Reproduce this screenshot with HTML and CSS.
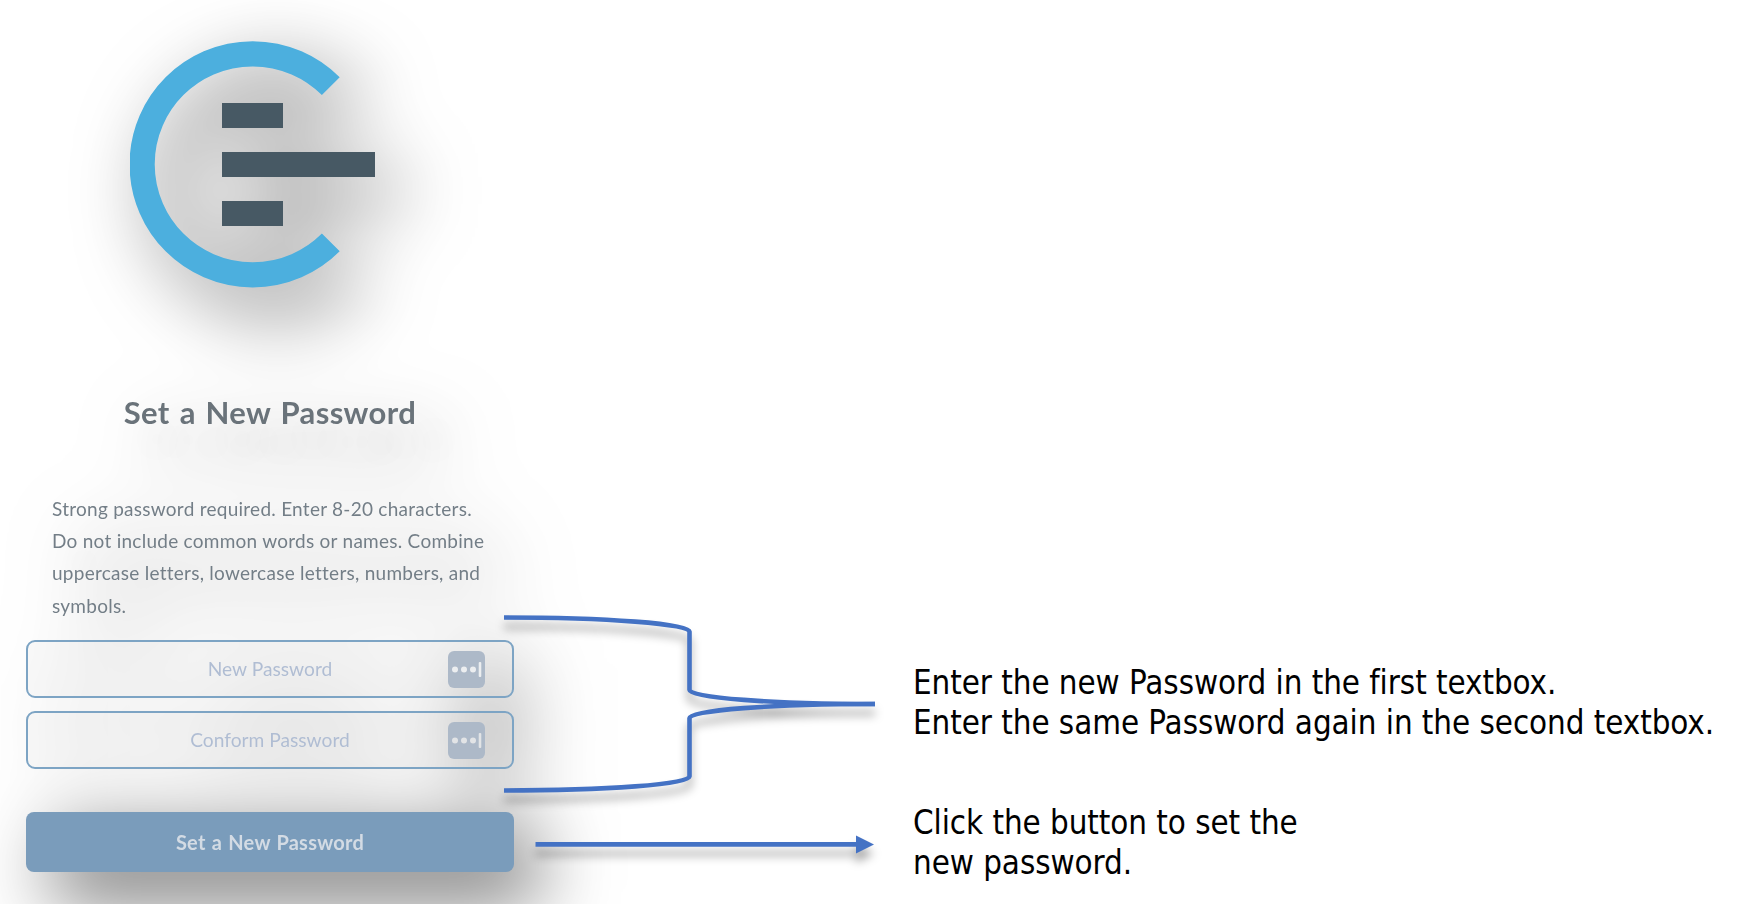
FILE: index.html
```html
<!DOCTYPE html>
<html lang="en">
<head>
  <meta charset="UTF-8" />
  <meta name="viewport" content="width=device-width, initial-scale=1.0"/>
  <title>Set a New Password</title>
  <link rel="stylesheet" href="styles.css">
</head>
<body>

  <div class="page">
    <div class="card">
      <svg class="logo" width="246" height="248" viewBox="0 0 246 248">
        <path d="M200.8 45.2 A110.5 110.5 0 1 0 200.8 201.4" fill="none" stroke="#4cafde" stroke-width="25.2"/>
        <g fill="#475964">
          <rect x="92" y="62" width="61" height="25"/>
          <rect x="92" y="111" width="153" height="25"/>
          <rect x="92" y="160" width="61" height="25"/>
        </g>
      </svg>

      <h1>Set a New Password</h1>

      <p class="rules">
        Strong password required. Enter 8-20 characters.<br>
        Do not include common words or names. Combine<br>
        uppercase letters, lowercase letters, numbers, and<br>
        symbols.
      </p>

      <form id="passwordForm">
        <div class="input-group">
          <input type="password" name="password" placeholder="New Password" />
          <svg class="key" width="37" height="37" viewBox="0 0 37 37">
            <rect width="37" height="37" rx="6" fill="#adb9c8"/>
            <g fill="#eceef0">
              <circle cx="7" cy="18.5" r="3"/>
              <circle cx="16" cy="18.5" r="3"/>
              <circle cx="25" cy="18.5" r="3"/>
              <rect x="30.7" y="11" width="2.6" height="15" rx="1"/>
            </g>
          </svg>
        </div>
        <div class="input-group">
          <input type="password" name="confirm" placeholder="Conform Password" />
          <svg class="key" width="37" height="37" viewBox="0 0 37 37">
            <rect width="37" height="37" rx="6" fill="#adb9c8"/>
            <g fill="#e2e4e6">
              <circle cx="7" cy="18.5" r="3"/>
              <circle cx="16" cy="18.5" r="3"/>
              <circle cx="25" cy="18.5" r="3"/>
              <rect x="30.7" y="11" width="2.6" height="15" rx="1"/>
            </g>
          </svg>
        </div>
        <button type="submit">Set a New Password</button>
      </form>
    </div>

    <svg class="lines" width="384" height="304" viewBox="0 0 384 304">
      <g fill="none" stroke="#4472c4" stroke-width="4.6" stroke-linejoin="round">
        <path d="M4 17.5 A185.5 14 0 0 1 189.5 31.5 V90 A185.5 14 0 0 0 375 104"/>
        <path d="M4 190.5 A185.5 14 0 0 0 189.5 176.5 V118 A185.5 14 0 0 1 375 104"/>
        <path d="M35.5 244.4 H358"/>
      </g>
      <path d="M356 235.5 L374 244.4 L356 253.5 Z" fill="#4472c4"/>
    </svg>

    <div class="notes">
      <p class="note">Enter the new Password in the first textbox.<br>Enter the same Password again in the second textbox.</p>
      <p class="note">Click the button to set the<br>new password.</p>
    </div>
  </div>

</body>
</html>
```
FILE: styles.css
```css
* {
  box-sizing: border-box;
}

body {
  margin: 0;
  background: #fff;
  overflow: hidden;
}

.page {
  display: flex;
  height: 904px;
}

.card {
  width: 488px;
  height: 904px;
  margin-left: 26px;
  padding-top: 41px;
  flex: none;
  font-family: Lato, sans-serif;
  filter: drop-shadow(25px 26px 37px rgba(0,0,0,0.6));
}

.logo {
  display: block;
  margin-left: 104px;
}

h1 {
  margin: 103px 0 0;
  height: 40px;
  line-height: 40px;
  text-align: center;
  font-size: 31px;
  font-weight: bold;
  letter-spacing: 0.35px;
  word-spacing: 2px;
  color: #6a737a;
  text-shadow: 25px 26px 40px rgba(0,0,0,0.2);
}

.rules {
  margin: 61px 0 0 26px;
  font-size: 19px;
  line-height: 32.2px;
  letter-spacing: 0.26px;
  color: #737e87;
  white-space: nowrap;
  text-shadow: 25px 22px 40px rgba(0,0,0,0.3);
}

form {
  margin-top: 18px;
}

.input-group {
  position: relative;
  height: 58px;
  margin-bottom: 13px;
}

.input-group input {
  display: block;
  width: 100%;
  height: 100%;
  padding: 0;
  border: 2px solid #7da4c4;
  border-radius: 9px;
  background: rgba(0,0,0,0.02);
  text-align: center;
  outline: none;
  font-family: inherit;
  font-size: 19.2px;
}

.input-group input::placeholder {
  color: #b0bdd3;
  opacity: 1;
}

.key {
  position: absolute;
  right: 29px;
  top: 11px;
}

button {
  display: block;
  width: 100%;
  height: 60px;
  margin-top: 43px;
  border: none;
  border-radius: 8px;
  background: #7a9cbb;
  font-family: inherit;
  font-weight: bold;
  font-size: 20px;
  letter-spacing: 0.25px;
  word-spacing: 1px;
  color: #d3dbe4;
}

.lines {
  flex: none;
  margin: 600px 0 0 -14px;
  filter: drop-shadow(0 9px 5px rgba(0,0,0,0.35));
}

.notes {
  margin: 663px 0 0 29px;
  font-family: "DejaVu Sans Condensed", "DejaVu Sans", sans-serif;
  font-size: 32.8px;
  line-height: 40px;
  letter-spacing: -0.05px;
  color: #000;
  white-space: nowrap;
}

.note {
  margin: 0 0 60px;
}
```
